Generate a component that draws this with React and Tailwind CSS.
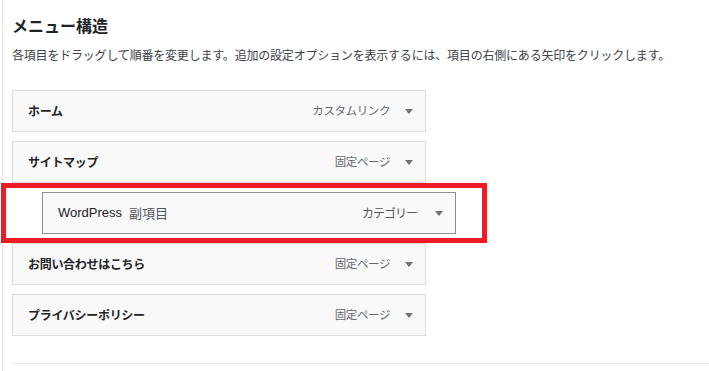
import React from "react";

const menuItems = [
	{ label: "ホーム", type: "カスタムリンク" },
	{ label: "サイトマップ", type: "固定ページ" },
	{ label: "WordPress", sub: "副項目", type: "カテゴリー", child: true },
	{ label: "お問い合わせはこちら", type: "固定ページ" },
	{ label: "プライバシーポリシー", type: "固定ページ" },
];

const jp = { fontFamily: '"Noto Sans CJK JP", "Noto Sans", sans-serif' };
const latin = { fontFamily: '"Liberation Sans", "Noto Sans CJK JP", sans-serif' };

const Arrow = () => (
	<svg width="8" height="5" viewBox="0 0 8 5" className="shrink-0">
		<polygon points="0,0 8,0 4,5" fill="#6f7378" />
	</svg>
);

const MenuItem = ({ item }) => {
	if (item.child) {
		return (
			<div className="relative ml-[30px] w-[414px]">
				<div className="flex h-[42px] items-center border border-[#8c8f94] bg-[#f9f9f9] pl-[15px] pr-[12px]" style={latin}>
					<span className="text-[13px] text-[#1d2327]">{item.label}</span>
					<span className="ml-[7px] text-[13px] text-[#50575e]" style={jp}>{item.sub}</span>
					<span className="ml-auto text-[12px] tracking-[-1px] text-[#50575e]" style={jp}>{item.type}</span>
					<span className="ml-[18px]"><Arrow /></span>
				</div>
				<div className="pointer-events-none absolute -top-[9px] -bottom-[9px] -left-[41px] -right-[31px] border-[5px] border-[#ed1c24]" />
			</div>
		);
	}

	return (
		<div className="flex h-[42px] w-[414px] items-center border border-[#dcdcde] bg-[#f9f9f9] pl-[15px] pr-[12px]" style={jp}>
			<span className="text-[12px] font-bold tracking-[-0.3px] text-[#1d2327]">{item.label}</span>
			<span className="ml-auto text-[11.5px] tracking-[-0.4px] text-[#646970]">{item.type}</span>
			<span className="ml-[15px]"><Arrow /></span>
		</div>
	);
};

const App = () => {
	return (
		<div className="min-h-[371px] bg-white pl-[2px]">
			<div className="min-h-[371px] border-l border-[#e8e8e8] pl-[9px]" style={jp}>
				<h2 className="pt-[13px] text-[16px] font-semibold leading-[24px] text-[#1d2327]">メニュー構造</h2>
				<p className="mt-[9px] text-[12px] leading-[18px] tracking-[-0.2px] text-[#3c434a]">
					各項目をドラッグして順番を変更します。追加の設定オプションを表示するには、項目の右側にある矢印をクリックします。
				</p>

				<div className="mt-[26px] flex flex-col gap-[9px]">
					{menuItems.map((item) => (
						<MenuItem key={item.label} item={item} />
					))}
				</div>

				<div className="mt-[27px] border-t border-[#e8e8e8]" />
			</div>
		</div>
	);
};

export default App;
